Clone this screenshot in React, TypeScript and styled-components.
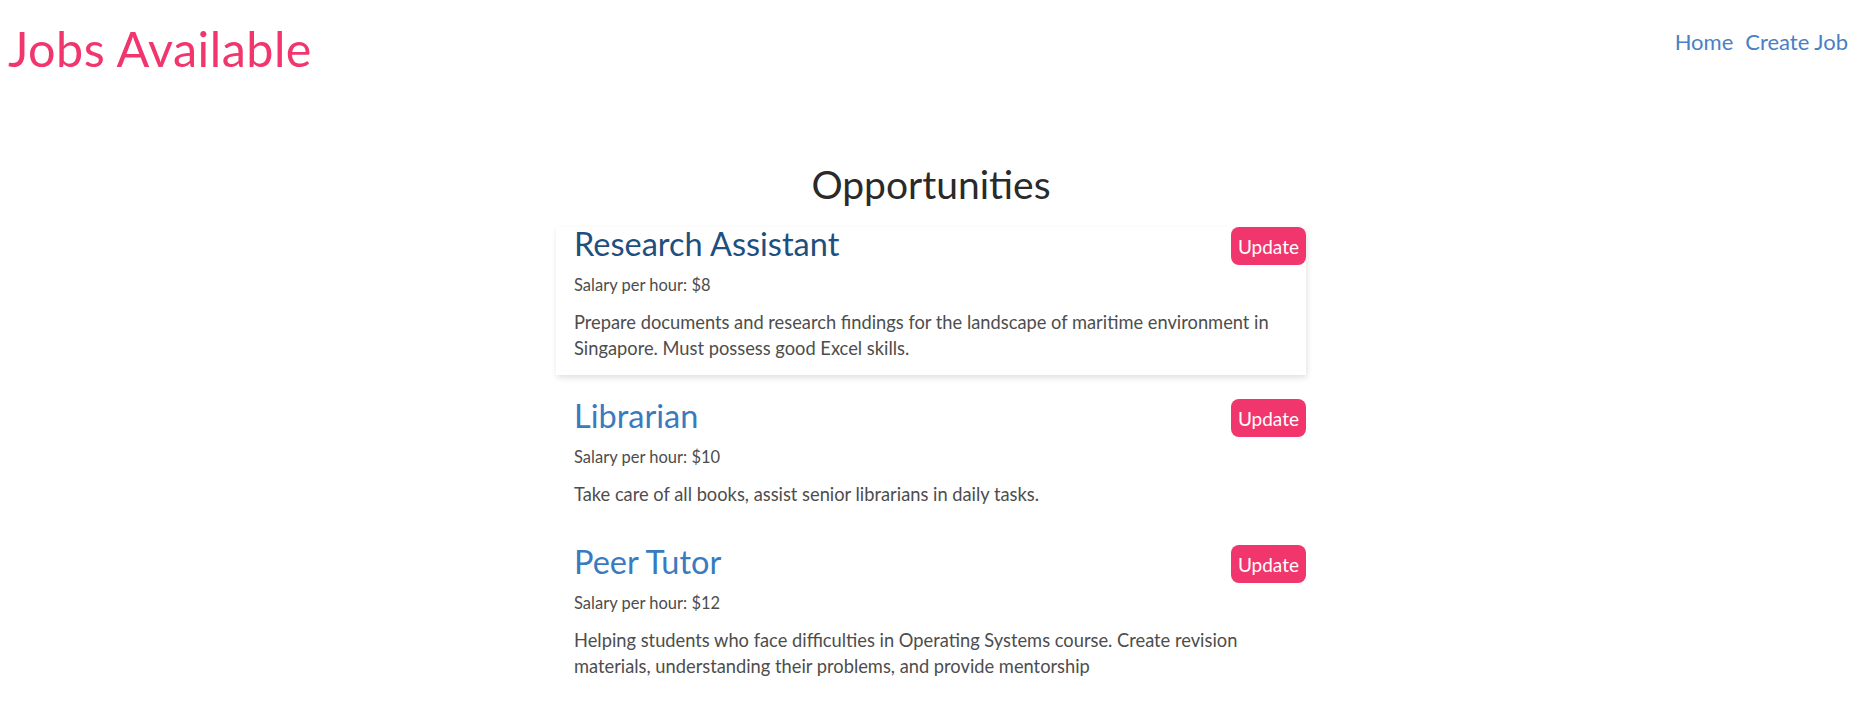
import React from "react";
import styled, { createGlobalStyle } from "styled-components";

const GlobalStyle = createGlobalStyle`
  html, body { background: #ffffff; }
  body {
    margin: 8px;
    font-family: "Lato", "Noto Sans", sans-serif;
    color: #333333;
  }
  * { box-sizing: border-box; }
`;

const NavBar = styled.nav`
  display: flex;
  align-items: flex-start;
  justify-content: space-between;
  height: 70px;
`;

const Brand = styled.h1`
  margin: 12px 0 0 0;
  font-size: 48.5px;
  font-weight: 400;
  line-height: 56px;
  color: #f1356d;
  letter-spacing: 0.5px;
`;

const Links = styled.div`
  display: flex;
  margin-top: 16px;
`;

const NavLink = styled.a`
  padding: 6px;
  font-size: 22px;
  line-height: 24px;
  color: #4a7fc4;
  text-decoration: none;
  cursor: pointer;
`;

const Main = styled.main`
  width: 750px;
  margin: 0 auto;
  padding-top: 83px;
`;

const Heading = styled.h2`
  margin: 0 0 20px 0;
  text-align: center;
  font-size: 39px;
  font-weight: 400;
  line-height: 46px;
  color: #2a2a2a;
`;

const Card = styled.div<{ $active?: boolean }>`
  padding: 0 0 14px 18px;
  margin-bottom: 24px;
  box-shadow: ${(p) => (p.$active ? "1px 3px 6px rgba(0,0,0,0.12)" : "none")};
`;

const CardHeader = styled.div`
  display: flex;
  align-items: flex-start;
  justify-content: space-between;
  height: 38px;
`;

const JobTitle = styled.h3<{ $active?: boolean }>`
  margin: 0;
  font-size: 32.5px;
  font-weight: 400;
  line-height: 34px;
  color: ${(p) => (p.$active ? "#1f4f7d" : "#3a7bbf")};
`;

const UpdateButton = styled.button`
  height: 38px;
  padding: 0 7px;
  border: none;
  border-radius: 8px;
  background: #f1356d;
  color: #ffffff;
  font-family: "Lato", "Noto Sans", sans-serif;
  font-size: 19px;
  cursor: pointer;
`;

const CardBody = styled.div`
  padding-right: 22px;
`;

const Salary = styled.p`
  margin: 8px 0 11px 0;
  font-size: 16.5px;
  line-height: 25px;
  color: #4d4d4d;
`;

const Description = styled.p`
  margin: 0;
  font-size: 18.3px;
  line-height: 26px;
  color: #4d4d4d;
`;

type Job = { title: string; salary: number; description: string };

const jobs: Job[] = [
  {
    title: "Research Assistant",
    salary: 8,
    description:
      "Prepare documents and research findings for the landscape of maritime environment in Singapore. Must possess good Excel skills.",
  },
  {
    title: "Librarian",
    salary: 10,
    description: "Take care of all books, assist senior librarians in daily tasks.",
  },
  {
    title: "Peer Tutor",
    salary: 12,
    description:
      "Helping students who face difficulties in Operating Systems course. Create revision materials, understanding their problems, and provide mentorship",
  },
];

export default function App() {
  return (
    <>
      <GlobalStyle />
      <NavBar>
        <Brand>Jobs Available</Brand>
        <Links>
          <NavLink>Home</NavLink>
          <NavLink>Create Job</NavLink>
        </Links>
      </NavBar>
      <Main>
        <Heading>Opportunities</Heading>
        {jobs.map((job, i) => (
          <Card key={job.title} $active={i === 0}>
            <CardHeader>
              <JobTitle $active={i === 0}>{job.title}</JobTitle>
              <UpdateButton>Update</UpdateButton>
            </CardHeader>
            <CardBody>
              <Salary>Salary per hour: ${job.salary}</Salary>
              <Description>{job.description}</Description>
            </CardBody>
          </Card>
        ))}
      </Main>
    </>
  );
}
